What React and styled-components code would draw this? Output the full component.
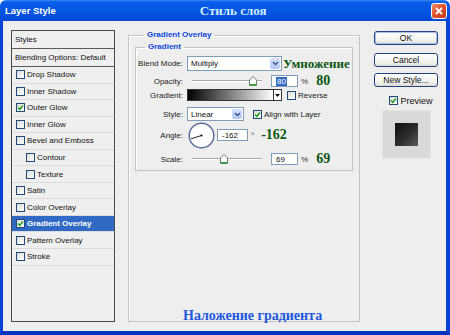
import React from 'react';
import styled, { createGlobalStyle } from 'styled-components';

const GlobalStyle = createGlobalStyle`
  html, body { margin: 0; padding: 0; background: #fff; }
  body { font-family: "Liberation Sans", Arial, sans-serif; }
`;

const Window = styled.div`
  width: 450px;
  height: 335px;
  display: flex;
  flex-direction: column;
  overflow: hidden;
`;

const TitleBar = styled.div`
  height: 21px;
  flex: none;
  display: flex;
  align-items: center;
  background: linear-gradient(#3a8af6 0, #0b5ee9 2px, #0557e4 45%, #0349d6 100%);
  border-radius: 6px 6px 0 0;
`;

const TitleText = styled.span`
  margin-left: 5px;
  color: #fff;
  font-size: 9.5px;
  font-weight: bold;
`;

const RuTitle = styled.span`
  margin-left: 144px;
  color: #cfeeff;
  font-family: "Liberation Serif", "Times New Roman", serif;
  font-size: 13px;
  font-weight: bold;
`;

const CloseBtn = styled.div`
  margin-left: auto;
  margin-right: 3px;
  width: 16px;
  height: 16px;
  box-sizing: border-box;
  border: 1px solid #fff;
  border-radius: 3px;
  background: linear-gradient(135deg, #f08a6a 0%, #e0552f 45%, #c43a16 100%);
  display: flex;
  align-items: center;
  justify-content: center;
`;

const Frame = styled.div`
  flex: 1;
  display: flex;
  border-left: 3px solid #0841d6;
  border-right: 4px solid #0841d6;
  border-bottom: 4px solid #0733c0;
  background: #eeeeee;
  padding: 9px 8px 0 8px;
  box-sizing: border-box;
`;

const StyleList = styled.div`
  width: 104px;
  height: 292px;
  box-sizing: border-box;
  border: 1px solid #4a4a4a;
  background: #efefef;
  flex: none;
  display: flex;
  flex-direction: column;
`;

const HeadRow = styled.div`
  height: 18px;
  flex: none;
  box-sizing: border-box;
  border-bottom: 1px solid #5a5a5a;
  padding-left: 3px;
  display: flex;
  align-items: center;
  font-size: 8px;
  color: #111;
`;

const ItemRow = styled.div`
  height: 16.55px;
  flex: none;
  box-sizing: border-box;
  border-bottom: 1px solid #dcdcdc;
  padding-left: ${p => (p.$indent ? 14 : 4)}px;
  display: flex;
  align-items: center;
  gap: 2px;
  font-size: 8px;
  color: ${p => (p.$active ? '#fff' : '#111')};
  font-weight: ${p => (p.$active ? 'bold' : 'normal')};
  background: ${p => (p.$active ? '#316ac5' : 'transparent')};
`;

const Box = styled.span`
  width: 9px;
  height: 9px;
  flex: none;
  box-sizing: border-box;
  border: 1px solid #1f4a7a;
  background: linear-gradient(135deg, #dcdcd6, #ffffff);
  display: inline-flex;
  align-items: center;
  justify-content: center;
`;

const Group = styled.fieldset`
  margin: 0;
  min-width: 0;
  box-sizing: border-box;
  border: 1px solid #c4c4c4;
  box-shadow: inset 1px 1px 0 #fff;
`;

const OuterGroup = styled(Group)`
  width: 232px;
  height: 292px;
  margin-left: 13px;
  padding: 2px 6px 0 6px;
  display: flex;
  flex-direction: column;
`;

const InnerGroup = styled(Group)`
  padding: 2px 0 5px 0;
`;

const Legend = styled.legend`
  margin-left: ${p => p.$ml}px;
  padding: 0 3px;
  font-size: 8px;
  font-weight: bold;
  color: #0a46d8;
  line-height: 10px;
`;

const Row = styled.div`
  display: flex;
  align-items: center;
  height: ${p => p.$h}px;
  margin-top: ${p => p.$mt}px;
`;

const Label = styled.span`
  width: 47px;
  margin-right: 4px;
  text-align: right;
  font-size: 8px;
  color: #222;
  flex: none;
`;

const SelectBox = styled.div`
  width: ${p => p.$w}px;
  height: ${p => p.$h}px;
  box-sizing: border-box;
  border: 1px solid #7f9db9;
  background: #fff;
  display: flex;
  align-items: center;
  font-size: 8px;
  color: #111;
  padding-left: 3px;
`;

const SelectArrow = styled.span`
  width: 10px;
  align-self: stretch;
  margin: 1px 1px 1px auto;
  border-radius: 2px;
  background: linear-gradient(#d4e2fc, #b2c8f4);
  display: flex;
  align-items: center;
  justify-content: center;
`;

const Slider = styled.div`
  position: relative;
  width: 70px;
  height: 10px;
  margin-left: 5px;
  margin-right: ${p => p.$mr}px;
  flex: none;
  &::before {
    content: '';
    position: absolute;
    left: 0;
    right: 0;
    top: 4px;
    height: 1px;
    background: #a9a9a9;
    border-bottom: 1px solid #fff;
  }
`;

const Thumb = styled.svg`
  position: absolute;
  top: 0;
  left: ${p => p.$x}px;
`;

const Field = styled.div`
  width: ${p => p.$w}px;
  height: 12px;
  box-sizing: border-box;
  border: 1px solid #7f9db9;
  background: #fff;
  font-size: 8px;
  color: #111;
  display: flex;
  align-items: center;
  padding-left: 4px;
  flex: none;
`;

const Selected = styled.span`
  background: #316ac5;
  color: #fff;
  padding: 0 1px;
`;

const Unit = styled.span`
  font-size: 8px;
  color: #333;
  margin-left: 3px;
`;

const Note = styled.span`
  font-family: "Liberation Serif", "Times New Roman", serif;
  font-weight: bold;
  font-size: ${p => p.$size || 14}px;
  color: #0b560f;
  margin-left: ${p => p.$ml}px;
  line-height: 1;
`;

const GradientBar = styled.div`
  width: 95px;
  height: 12px;
  box-sizing: border-box;
  border: 1px solid #333;
  display: flex;
  flex: none;
`;

const GradientFill = styled.div`
  flex: 1;
  background: linear-gradient(90deg, #000, #fff);
`;

const GradientDrop = styled.div`
  width: 7px;
  border-left: 1px solid #333;
  background: #fff;
  display: flex;
  align-items: center;
  justify-content: center;
`;

const CheckLabel = styled.span`
  font-size: 8px;
  color: #222;
  margin-left: 2px;
`;

const Caption = styled.div`
  margin-top: auto;
  margin-bottom: -3px;
  margin-left: 48px;
  font-family: "Liberation Serif", "Times New Roman", serif;
  font-weight: bold;
  font-size: 14px;
  color: #1d58de;
`;

const SideColumn = styled.div`
  width: 64px;
  margin-left: 14px;
  padding-top: 1px;
  display: flex;
  flex-direction: column;
  align-items: center;
  flex: none;
`;

const Button = styled.div`
  width: 64px;
  height: 14px;
  box-sizing: border-box;
  margin-bottom: ${p => p.$mb}px;
  border: 1px solid #23407f;
  border-radius: 3px;
  background: linear-gradient(#ffffff, #f1f1ec 70%, #dcdcd4);
  box-shadow: ${p => (p.$default ? 'inset 0 0 0 1px #a9c3f0' : 'none')};
  display: flex;
  align-items: center;
  justify-content: center;
  font-size: 8.5px;
  color: #111;
`;

const PreviewRow = styled.div`
  display: flex;
  align-items: center;
  gap: 2px;
  font-size: 9px;
  color: #111;
  margin-left: 10px;
  height: 9px;
`;

const PreviewBox = styled.div`
  width: 49px;
  height: 49px;
  margin-top: 5px;
  background: #d9d9d9;
  box-sizing: border-box;
  border: 1px solid #e6e6e6;
  display: flex;
  align-items: center;
  justify-content: center;
`;

const Swatch = styled.div`
  width: 23px;
  height: 23px;
  background: linear-gradient(135deg, #0e0e0e 0%, #2e2e2e 55%, #5a5a5a 100%);
`;

const Check = () => (
  <svg width="7" height="7" viewBox="0 0 7 7">
    <path d="M1 3.5 L2.8 5.3 L6 1.5" fill="none" stroke="#21a121" strokeWidth="1.6" />
  </svg>
);

const CheckBox = ({ checked }) => <Box>{checked && <Check />}</Box>;

const Chevron = () => (
  <svg width="7" height="5" viewBox="0 0 7 5">
    <path d="M1 1 L3.5 3.5 L6 1" fill="none" stroke="#3a4f8a" strokeWidth="1.4" />
  </svg>
);

const SliderThumb = ({ x }) => (
  <Thumb $x={x} width="8" height="10" viewBox="0 0 8 10">
    <path d="M0.5 4 L4 0.5 L7.5 4 L7.5 9.5 L0.5 9.5 Z" fill="#fff" stroke="#6d7f6d" />
    <rect x="1" y="8" width="6" height="1.5" fill="#2eaa3a" />
  </Thumb>
);

const styleItems = [
  { name: 'Drop Shadow' },
  { name: 'Inner Shadow' },
  { name: 'Outer Glow', checked: true },
  { name: 'Inner Glow' },
  { name: 'Bevel and Emboss' },
  { name: 'Contour', indent: true },
  { name: 'Texture', indent: true },
  { name: 'Satin' },
  { name: 'Color Overlay' },
  { name: 'Gradient Overlay', checked: true, active: true },
  { name: 'Pattern Overlay' },
  { name: 'Stroke' },
];

export default function App() {
  return (
    <Window>
      <GlobalStyle />
      <TitleBar>
        <TitleText>Layer Style</TitleText>
        <RuTitle>Стиль слоя</RuTitle>
        <CloseBtn>
          <svg width="8" height="8" viewBox="0 0 8 8">
            <path d="M1 1 L7 7 M7 1 L1 7" stroke="#fff" strokeWidth="1.8" />
          </svg>
        </CloseBtn>
      </TitleBar>
      <Frame>
        <StyleList>
          <HeadRow>Styles</HeadRow>
          <HeadRow>Blending Options: Default</HeadRow>
          {styleItems.map(item => (
            <ItemRow key={item.name} $indent={item.indent} $active={item.active}>
              <CheckBox checked={item.checked} />
              {item.name}
            </ItemRow>
          ))}
        </StyleList>

        <OuterGroup>
          <Legend $ml={9}>Gradient Overlay</Legend>
          <InnerGroup>
            <Legend $ml={9}>Gradient</Legend>
            <Row $h={15} $mt={2}>
              <Label>Blend Mode:</Label>
              <SelectBox $w={95} $h={15}>
                Multiply
                <SelectArrow><Chevron /></SelectArrow>
              </SelectBox>
              <Note $size={13} $ml={1}>Умножение</Note>
            </Row>
            <Row $h={12} $mt={4}>
              <Label>Opacity:</Label>
              <Slider $mr={9}><SliderThumb x={57} /></Slider>
              <Field $w={27}><Selected>80</Selected></Field>
              <Unit>%</Unit>
              <Note $ml={8}>80</Note>
            </Row>
            <Row $h={12} $mt={2}>
              <Label>Gradient:</Label>
              <GradientBar>
                <GradientFill />
                <GradientDrop>
                  <svg width="5" height="3" viewBox="0 0 5 3"><path d="M0 0 L5 0 L2.5 3 Z" fill="#111" /></svg>
                </GradientDrop>
              </GradientBar>
              <span style={{ width: 5 }} />
              <CheckBox />
              <CheckLabel>Reverse</CheckLabel>
            </Row>
            <Row $h={14} $mt={6}>
              <Label>Style:</Label>
              <SelectBox $w={57} $h={14}>
                Linear
                <SelectArrow><Chevron /></SelectArrow>
              </SelectBox>
              <span style={{ width: 9 }} />
              <CheckBox checked />
              <CheckLabel>Align with Layer</CheckLabel>
            </Row>
            <Row $h={26} $mt={1}>
              <Label>Angle:</Label>
              <svg width="27" height="27" viewBox="0 0 27 27" style={{ flex: 'none', marginLeft: 1 }}>
                <circle cx="13.5" cy="13.5" r="12.3" fill="#fff" stroke="#5d6e9e" strokeWidth="1.5" />
                <line x1="13.5" y1="13.5" x2="3" y2="16.8" stroke="#222" strokeWidth="1" />
                <circle cx="13.5" cy="13.5" r="1.1" fill="#111" />
              </svg>
              <span style={{ width: 2 }} />
              <Field $w={31}>-162</Field>
              <Unit>°</Unit>
              <Note $ml={7}>-162</Note>
            </Row>
            <Row $h={12} $mt={5}>
              <Label>Scale:</Label>
              <Slider $mr={9}><SliderThumb x={28} /></Slider>
              <Field $w={27}>69</Field>
              <Unit>%</Unit>
              <Note $ml={8}>69</Note>
            </Row>
          </InnerGroup>
          <Caption>Наложение градиента</Caption>
        </OuterGroup>

        <SideColumn>
          <Button $mb={8} $default>OK</Button>
          <Button $mb={6}>Cancel</Button>
          <Button $mb={9}>New Style...</Button>
          <PreviewRow>
            <CheckBox checked />
            Preview
          </PreviewRow>
          <PreviewBox>
            <Swatch />
          </PreviewBox>
        </SideColumn>
      </Frame>
    </Window>
  );
}
